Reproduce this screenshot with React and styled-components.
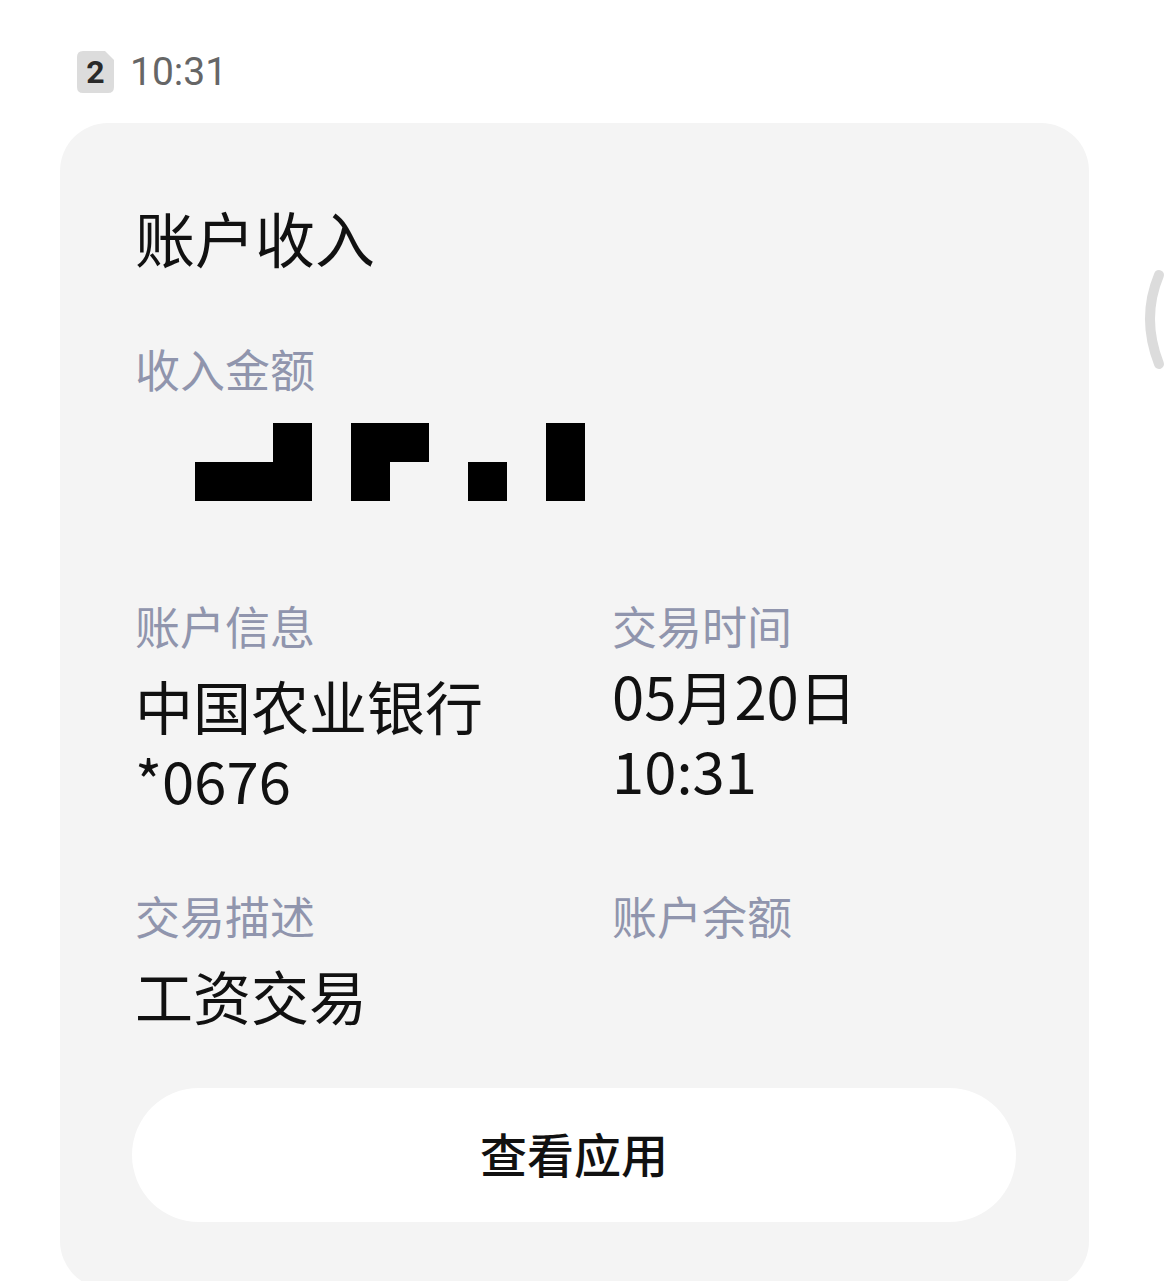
import React from 'react'
import styled, { createGlobalStyle } from 'styled-components'

const GlobalStyle = createGlobalStyle`
  html, body {
    margin: 0;
    padding: 0;
    background: #ffffff;
  }

  body {
    font-family: "Noto Sans CJK SC", "Noto Sans", sans-serif;
    overflow: hidden;
  }
`

const Page = styled.div`
  position: relative;
  width: 1173px;
  height: 1281px;
  overflow: hidden;
`

const StatusRow = styled.div`
  display: flex;
  align-items: center;
  gap: 16px;
  padding: 51px 0 0 77px;
  height: 42px;
`

const SimBadge = styled.span`
  display: flex;
  align-items: center;
  justify-content: center;
  width: 37px;
  height: 42px;
  background: #dcdcdc;
  clip-path: path('M6 0 H28 L37 9 V36 Q37 42 31 42 H6 Q0 42 0 36 V6 Q0 0 6 0 Z');
  font-family: Roboto, "Noto Sans", sans-serif;
  font-weight: 700;
  font-size: 32px;
  line-height: 42px;
  color: #2a2a2a;
`

const Clock = styled.span`
  font-family: Roboto, "Noto Sans", sans-serif;
  font-size: 39px;
  line-height: 42px;
  color: #666666;
`

const Card = styled.section`
  margin: 30px 0 0 60px;
  width: 1029px;
  box-sizing: border-box;
  padding: 84px 73px 67px 75px;
  background: #f4f4f4;
  border-radius: 48px;
`

const Title = styled.h1`
  margin: 0;
  font-size: 60px;
  line-height: 60px;
  font-weight: 400;
  color: #111111;
`

const Label = styled.div`
  margin-top: ${p => p.$top || 0}px;
  font-size: 45px;
  line-height: 45px;
  color: #9095ad;
`

const Value = styled.div`
  margin-top: ${p => (p.$raised ? 10 : 20)}px;
  font-size: 58px;
  line-height: 74px;
  color: #111111;
`

const Redacted = styled.div`
  display: grid;
  grid-template-columns: repeat(10, 39px);
  grid-auto-rows: 39px;
  margin: 32px 0 0 60px;
`

const Cell = styled.span`
  background: ${p => (p.$on ? '#000000' : 'transparent')};
`

const InfoGrid = styled.div`
  display: grid;
  grid-template-columns: 477px 1fr;
  row-gap: 77px;
  margin-top: 102px;
`

const Field = styled.div`
  display: flex;
  flex-direction: column;
`

const ViewButton = styled.button`
  display: flex;
  align-items: center;
  justify-content: center;
  width: 884px;
  height: 134px;
  margin: 56px 0 0 -3px;
  padding: 0 0 6px;
  border: none;
  border-radius: 67px;
  background: #ffffff;
  font-family: "Noto Sans CJK SC", sans-serif;
  font-size: 47px;
  font-weight: 500;
  color: #111111;
`

const EdgeArc = styled.svg`
  position: absolute;
  left: 1130px;
  top: 260px;
`

const masked = [
  0, 0, 1, 0, 1, 1, 0, 0, 0, 1,
  1, 1, 1, 0, 1, 0, 0, 1, 0, 1,
]

const fields = [
  { label: '账户信息', lines: ['中国农业银行', '*0676'] },
  { label: '交易时间', lines: ['05月20日', '10:31'], raised: true },
  { label: '交易描述', lines: ['工资交易'] },
  { label: '账户余额', lines: [] },
]

export default function App() {
  return (
    <Page>
      <GlobalStyle />
      <StatusRow>
        <SimBadge>2</SimBadge>
        <Clock>10:31</Clock>
      </StatusRow>

      <Card>
        <Title>账户收入</Title>
        <Label $top={79}>收入金额</Label>
        <Redacted>
          {masked.map((on, i) => <Cell key={i} $on={on} />)}
        </Redacted>

        <InfoGrid>
          {fields.map(f => (
            <Field key={f.label}>
              <Label>{f.label}</Label>
              {f.lines.length > 0 && (
                <Value $raised={f.raised}>
                  {f.lines.map(line => <div key={line}>{line}</div>)}
                </Value>
              )}
            </Field>
          ))}
        </InfoGrid>

        <ViewButton>查看应用</ViewButton>
      </Card>

      <EdgeArc width="40" height="120" viewBox="1130 260 40 120">
        <path d="M1159 275 Q1141 318 1159 364" fill="none" stroke="#dcdcdc" strokeWidth="10" strokeLinecap="round" />
      </EdgeArc>
    </Page>
  )
}
